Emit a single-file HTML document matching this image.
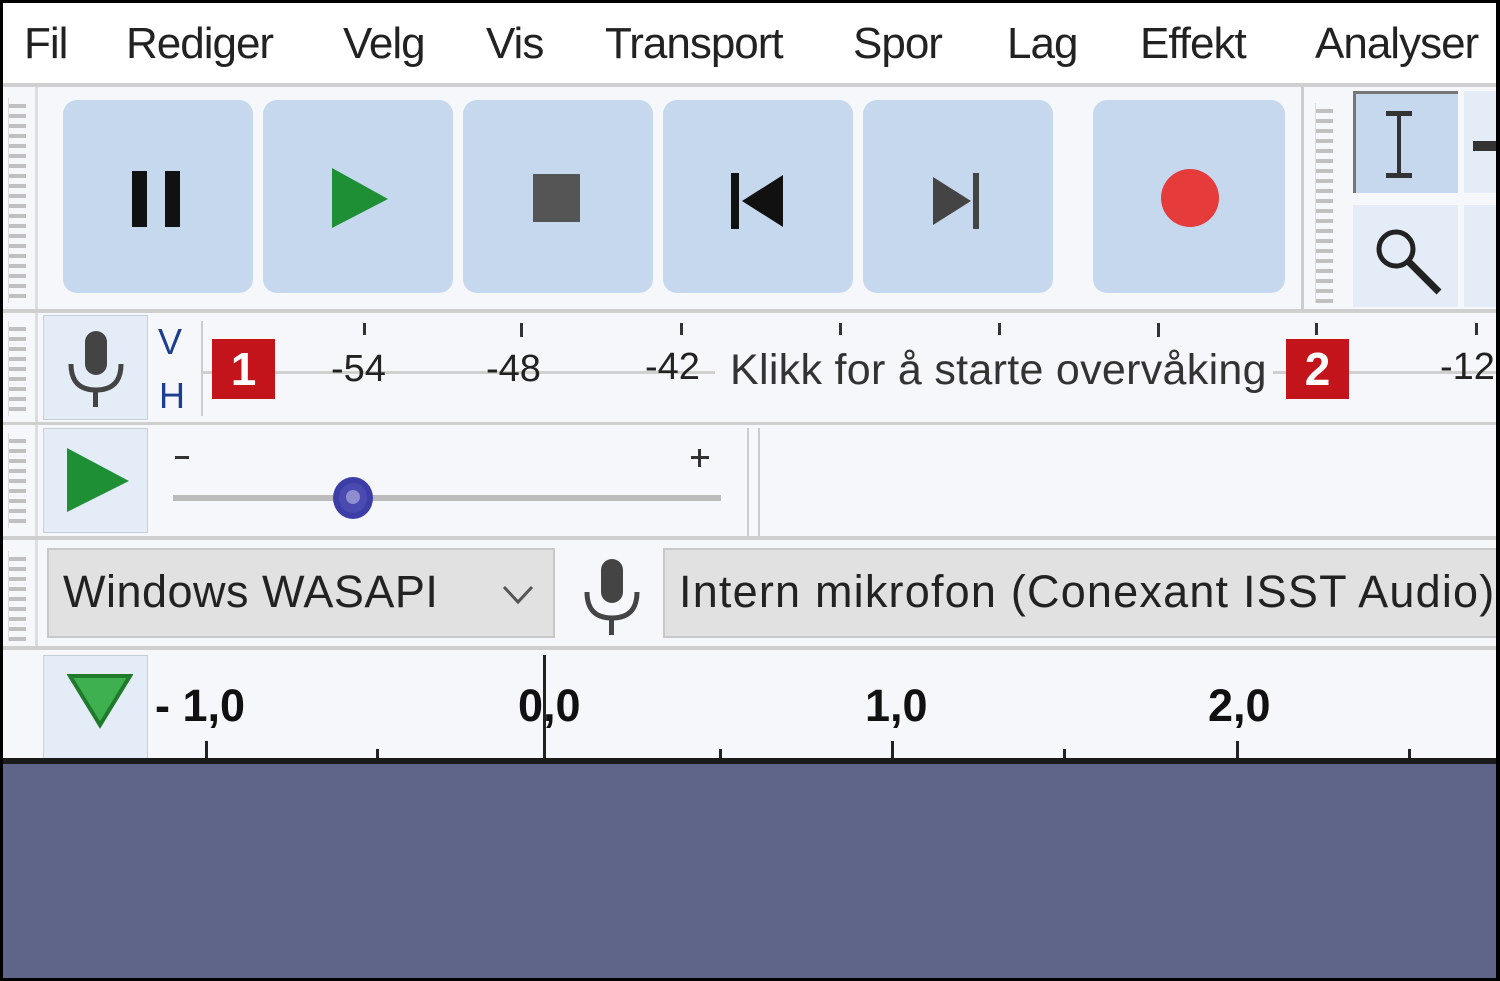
<!DOCTYPE html>
<html><head><meta charset="utf-8"><style>
*{margin:0;padding:0;box-sizing:border-box}
body{width:1500px;height:981px;overflow:hidden;background:#000;position:relative;font-family:"Liberation Sans",sans-serif}
.a{position:absolute}
#f{left:3px;top:3px;width:1493px;height:975px;background:#f5f7fb;overflow:hidden}
.menu{font-size:44px;color:#222;top:16px;letter-spacing:-1px}
.btn{background:#c6d8ee;border-radius:14px}
.grip{width:18px;background:repeating-linear-gradient(#f5f7fb 0 6px,#c0c0c0 6px 10px);border-left:1px solid #ddd}
.hl{height:4px;background:#cfcfcf}
.sq{background:#e3ecf7;border:1px solid #c6ced8}
.num{font-size:38px;color:#222}
.bold{font-weight:bold;font-size:45px;color:#111}
</style></head><body>
<div id="f" class="a">
<div class="a" style="left:0;top:0;width:1493px;height:80px;background:#fff"></div>
<div class="a menu" style="left:21px">Fil</div>
<div class="a menu" style="left:123px">Rediger</div>
<div class="a menu" style="left:340px">Velg</div>
<div class="a menu" style="left:483px">Vis</div>
<div class="a menu" style="left:602px">Transport</div>
<div class="a menu" style="left:850px">Spor</div>
<div class="a menu" style="left:1004px">Lag</div>
<div class="a menu" style="left:1137px">Effekt</div>
<div class="a menu" style="left:1312px">Analyser</div>
<div class="a hl" style="left:0;top:80px;width:1493px"></div>
<div class="a" style="left:32px;top:84px;width:3px;height:560px;background:#ddd"></div>
<div class="a grip" style="left:5px;top:95px;height:205px"></div>
<div class="a btn" style="left:60px;top:97px;width:190px;height:193px"></div>
<div class="a btn" style="left:260px;top:97px;width:190px;height:193px"></div>
<div class="a btn" style="left:460px;top:97px;width:190px;height:193px"></div>
<div class="a btn" style="left:660px;top:97px;width:190px;height:193px"></div>
<div class="a btn" style="left:860px;top:97px;width:190px;height:193px"></div>
<div class="a btn" style="left:1090px;top:97px;width:192px;height:193px"></div>
<div class="a" style="left:129px;top:168px;width:15px;height:56px;background:#111"></div>
<div class="a" style="left:162px;top:168px;width:15px;height:56px;background:#111"></div>
<svg class="a" style="left:325px;top:163px" width="65" height="65"><polygon points="4,2 60,33 4,62" fill="#1f8f35"/></svg>
<div class="a" style="left:530px;top:171px;width:47px;height:48px;background:#555"></div>
<svg class="a" style="left:725px;top:170px" width="60" height="56"><rect x="3" y="0" width="8" height="56" fill="#111"/><polygon points="55,2 55,54 14,28" fill="#111"/></svg>
<svg class="a" style="left:928px;top:170px" width="60" height="56"><polygon points="2,4 2,52 40,28" fill="#444"/><rect x="42" y="0" width="6" height="56" fill="#444"/></svg>
<div class="a" style="left:1158px;top:166px;width:58px;height:58px;border-radius:50%;background:#e53b3b"></div>
<div class="a" style="left:1298px;top:84px;width:3px;height:224px;background:#ccc"></div>
<div class="a grip" style="left:1312px;top:100px;height:200px"></div>
<div class="a" style="left:1350px;top:88px;width:105px;height:102px;background:#c6d8ee;border-left:3px solid #777;border-top:3px solid #777"></div>
<div class="a" style="left:1394px;top:110px;width:4px;height:62px;background:#333"></div>
<div class="a" style="left:1383px;top:108px;width:26px;height:5px;background:#333"></div>
<div class="a" style="left:1383px;top:170px;width:26px;height:5px;background:#333"></div>
<div class="a" style="left:1350px;top:202px;width:105px;height:102px;background:#e3ecf7"></div>
<svg class="a" style="left:1368px;top:220px" width="75" height="75"><circle cx="25" cy="26" r="17" fill="none" stroke="#222" stroke-width="5"/><line x1="38" y1="39" x2="68" y2="69" stroke="#222" stroke-width="7"/></svg>
<div class="a" style="left:1461px;top:88px;width:40px;height:102px;background:#e3ecf7"></div>
<div class="a" style="left:1470px;top:138px;width:30px;height:10px;background:#333"></div>
<div class="a" style="left:1461px;top:202px;width:40px;height:102px;background:#e3ecf7"></div>
<div class="a hl" style="left:0;top:306px;width:1493px"></div>
<div class="a grip" style="left:5px;top:318px;height:95px"></div>
<div class="a sq" style="left:40px;top:312px;width:105px;height:105px"></div>
<svg class="a" style="left:58px;top:325px" width="70" height="82"><rect x="24" y="3" width="22" height="44" rx="11" fill="#444"/><path d="M10 36 Q10 62 35 62 Q60 62 60 36" fill="none" stroke="#444" stroke-width="5"/><rect x="32" y="62" width="5" height="17" fill="#444"/></svg>
<div class="a" style="left:155px;top:318px;font-size:36px;color:#1d3d8f">V</div>
<div class="a" style="left:156px;top:372px;font-size:36px;color:#1d3d8f">H</div>
<div class="a" style="left:198px;top:318px;width:2px;height:95px;background:#ccc"></div>
<div class="a" style="left:200px;top:368px;width:1293px;height:3px;background:#d0d0d0"></div>
<div class="a" style="left:209px;top:336px;width:63px;height:60px;background:#c4141b;color:#fff;font-weight:bold;font-size:46px;text-align:center;line-height:60px">1</div>
<div class="a num" style="left:328px;top:345px">-54</div>
<div class="a num" style="left:483px;top:345px">-48</div>
<div class="a num" style="left:642px;top:343px">-42</div>
<div class="a" style="left:712px;top:343px;font-size:43px;color:#333;background:#f5f7fb;padding-left:15px;padding-right:6px;letter-spacing:0.3px">Klikk for å starte overvåking</div>
<div class="a" style="left:1283px;top:336px;width:63px;height:60px;background:#c4141b;color:#fff;font-weight:bold;font-size:46px;text-align:center;line-height:60px">2</div>
<div class="a num" style="left:1437px;top:343px">-12</div>
<div class="a" style="left:360px;top:320px;width:3px;height:12px;background:#333"></div>
<div class="a" style="left:517px;top:320px;width:3px;height:14px;background:#333"></div>
<div class="a" style="left:677px;top:320px;width:3px;height:12px;background:#333"></div>
<div class="a" style="left:836px;top:320px;width:3px;height:12px;background:#333"></div>
<div class="a" style="left:995px;top:320px;width:3px;height:12px;background:#333"></div>
<div class="a" style="left:1154px;top:320px;width:3px;height:14px;background:#333"></div>
<div class="a" style="left:1312px;top:320px;width:3px;height:12px;background:#333"></div>
<div class="a" style="left:1472px;top:320px;width:3px;height:12px;background:#333"></div>
<div class="a hl" style="left:0;top:419px;width:1493px;height:3px"></div>
<div class="a grip" style="left:5px;top:430px;height:95px"></div>
<div class="a sq" style="left:40px;top:425px;width:105px;height:105px"></div>
<svg class="a" style="left:60px;top:443px" width="70" height="70"><polygon points="4,2 66,35 4,66" fill="#1f8f35"/></svg>
<div class="a" style="left:172px;top:453px;width:14px;height:3px;background:#333"></div>
<div class="a" style="left:688px;top:453px;width:18px;height:3px;background:#333"></div>
<div class="a" style="left:695px;top:446px;width:3px;height:18px;background:#333"></div>
<div class="a" style="left:170px;top:492px;width:548px;height:6px;background:#bbb"></div>
<div class="a" style="left:330px;top:474px;width:40px;height:42px;border-radius:50%;background:#4a4ab0;border:6px solid #3d3da8"></div>
<div class="a" style="left:343px;top:487px;width:14px;height:14px;border-radius:50%;background:#8d8dd0"></div>
<div class="a" style="left:744px;top:425px;width:2px;height:108px;background:#ccc"></div>
<div class="a" style="left:755px;top:425px;width:2px;height:108px;background:#ccc"></div>
<div class="a hl" style="left:0;top:533px;width:1493px"></div>
<div class="a grip" style="left:5px;top:548px;height:90px"></div>
<div class="a" style="left:44px;top:545px;width:508px;height:90px;background:#e1e1e1;border:2px solid #c8c8c8"></div>
<div class="a" style="left:60px;top:563px;font-size:45px;color:#222;letter-spacing:0.5px">Windows WASAPI</div>
<svg class="a" style="left:498px;top:580px" width="34" height="24"><polyline points="3,4 17,19 31,4" fill="none" stroke="#555" stroke-width="3"/></svg>
<svg class="a" style="left:575px;top:553px" width="70" height="82"><rect x="23" y="3" width="22" height="44" rx="11" fill="#444"/><path d="M9 36 Q9 62 34 62 Q59 62 59 36" fill="none" stroke="#444" stroke-width="5"/><rect x="31" y="62" width="5" height="17" fill="#444"/></svg>
<div class="a" style="left:660px;top:545px;width:840px;height:90px;background:#e1e1e1;border:2px solid #c8c8c8"></div>
<div class="a" style="left:676px;top:563px;font-size:45px;color:#222;white-space:nowrap;letter-spacing:1.2px">Intern mikrofon (Conexant ISST Audio)</div>
<div class="a hl" style="left:0;top:643px;width:1493px"></div>
<div class="a sq" style="left:40px;top:652px;width:105px;height:104px"></div>
<svg class="a" style="left:64px;top:670px" width="66" height="56"><polygon points="3,3 63,3 33,52" fill="#3fb04f" stroke="#1f7a2c" stroke-width="4"/></svg>
<div class="a bold" style="left:152px;top:677px">- 1,0</div>
<div class="a bold" style="left:515px;top:677px">0,0</div>
<div class="a bold" style="left:862px;top:677px">1,0</div>
<div class="a bold" style="left:1205px;top:677px">2,0</div>
<div class="a" style="left:540px;top:652px;width:3px;height:105px;background:#222"></div>
<div class="a" style="left:202px;top:738px;width:3px;height:18px;background:#222"></div>
<div class="a" style="left:373px;top:746px;width:3px;height:10px;background:#222"></div>
<div class="a" style="left:716px;top:746px;width:3px;height:10px;background:#222"></div>
<div class="a" style="left:888px;top:738px;width:3px;height:18px;background:#222"></div>
<div class="a" style="left:1060px;top:746px;width:3px;height:10px;background:#222"></div>
<div class="a" style="left:1233px;top:738px;width:3px;height:18px;background:#222"></div>
<div class="a" style="left:1405px;top:746px;width:3px;height:10px;background:#222"></div>
<div class="a" style="left:0;top:755px;width:1493px;height:6px;background:#1a1a1a"></div>
<div class="a" style="left:0;top:761px;width:1493px;height:220px;background:#5f6588"></div>
</div>
</body></html>
